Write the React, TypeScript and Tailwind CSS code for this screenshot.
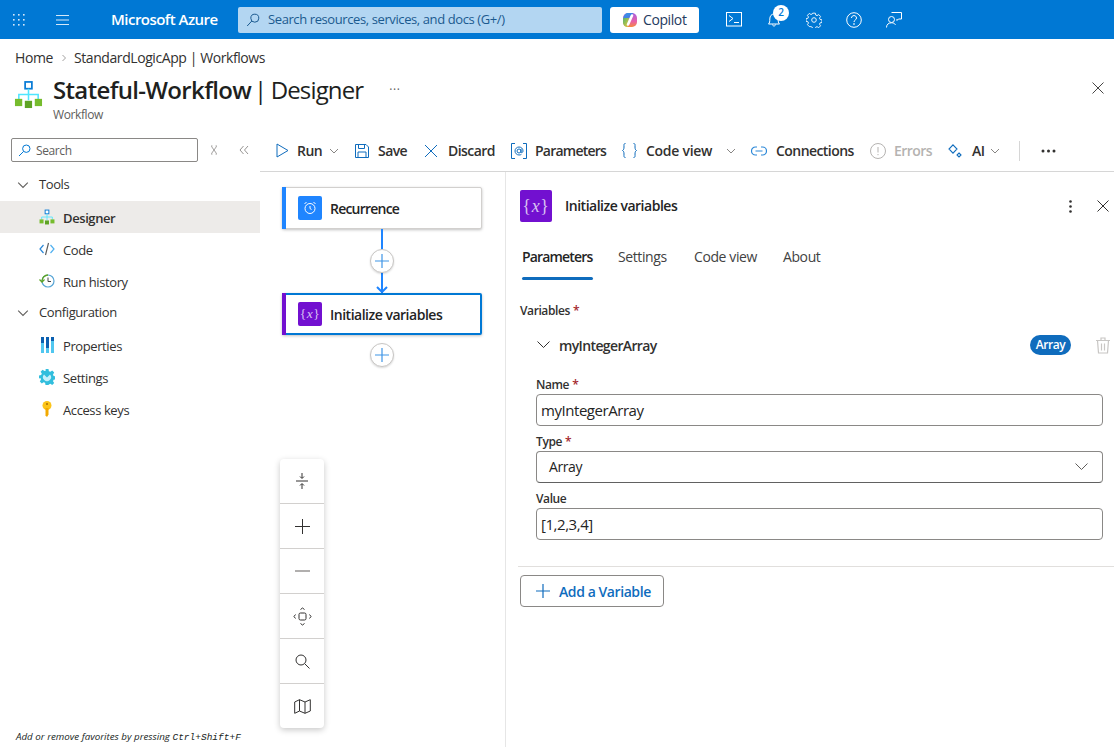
import React from 'react';

const fontBody = "font-['Open_Sans',sans-serif] tracking-[-0.025em]";

function WorkflowIcon({ size = 30 }: { size?: number }) {
  return (
    <svg width={size} height={size} viewBox="0 0 30 30" fill="none">
      <rect x="11.5" y="2" width="7" height="7" fill="#fff" stroke="#0a7cd6" strokeWidth="1.8" />
      <path d="M15 9v6M5 20v-5h20v5M15 15v6" stroke="#50e6ff" strokeWidth="1.6" />
      <rect x="1" y="19.5" width="7.5" height="7.5" fill="#76bc2d" />
      <rect x="11.2" y="21.5" width="7.5" height="7.5" fill="#5ea324" />
      <rect x="21.5" y="19.5" width="7.5" height="7.5" fill="#76bc2d" />
    </svg>
  );
}

function VarIcon({ size, radius }: { size: number; radius: string }) {
  return (
    <div
      className={`${radius} bg-[#7210d0] flex items-center justify-center text-[#d9c2f2] font-['Liberation_Serif',serif] shrink-0`}
      style={{ width: size, height: size, fontSize: size * 0.56 }}
    >
      <span className="tracking-[0.04em]">{'{'}<i>x</i>{'}'}</span>
    </div>
  );
}

function Chevron({ size = 10, color = '#605e5c' }: { size?: number; color?: string }) {
  return (
    <svg width={size} height={size} viewBox="0 0 10 10" fill="none">
      <path d="M1 3l4 4 4-4" stroke={color} strokeWidth="0.9" />
    </svg>
  );
}

function TopBar() {
  return (
    <header className="h-[39px] bg-[#0078d4] flex items-center text-white shrink-0">
      <div className="w-[38px] flex justify-center">
        <svg width="14" height="14" viewBox="0 0 14 14" fill="#d5e8f8">
          {[1, 6, 11].map((y) =>
            [1, 6, 11].map((x) => <rect key={`${x}-${y}`} x={x} y={y} width="1.6" height="1.6" />)
          )}
        </svg>
      </div>
      <div className="ml-[18px] w-[13px]">
        <svg width="13" height="12" viewBox="0 0 13 12" stroke="#d5e8f8" strokeWidth="1.1">
          <path d="M0 1.5h13M0 6h13M0 10.5h13" />
        </svg>
      </div>
      <div className="ml-[42px] w-[127px] text-[15px] font-semibold whitespace-nowrap tracking-[-0.035em]">Microsoft Azure</div>
      <div className="w-[364px] h-[26px] bg-[#b3d6f2] rounded-[2px] flex items-center text-[#1b5a8f] text-[13px] shrink-0">
        <svg className="ml-[8px] mr-[8px]" width="14" height="14" viewBox="0 0 14 14" fill="none" stroke="#1b5a8f" strokeWidth="1">
          <circle cx="8.8" cy="5.2" r="4" />
          <path d="M5.8 8l-4.6 5" />
        </svg>
        <span className="whitespace-nowrap">Search resources, services, and docs (G+/)</span>
      </div>
      <div className="ml-[8px] w-[89px] h-[26px] bg-white rounded-[3px] flex items-center shrink-0 text-[#243a5e] text-[14px] font-medium">
        <svg className="ml-[12px] mr-[5px]" width="16" height="16" viewBox="0 0 16 16">
          <defs>
            <linearGradient id="cpa" x1="0" y1="0" x2="1" y2="1">
              <stop offset="0" stopColor="#2b9fe8" />
              <stop offset="1" stopColor="#5a6be0" />
            </linearGradient>
            <linearGradient id="cpb" x1="0" y1="0" x2="0" y2="1">
              <stop offset="0" stopColor="#a860e0" />
              <stop offset="0.6" stopColor="#e860a8" />
              <stop offset="1" stopColor="#f58a3f" />
            </linearGradient>
            <linearGradient id="cpc" x1="0" y1="0" x2="1" y2="1">
              <stop offset="0" stopColor="#4fb86a" />
              <stop offset="1" stopColor="#f2c73a" />
            </linearGradient>
          </defs>
          <rect x="1" y="1" width="14" height="14" rx="5" fill="url(#cpb)" />
          <path d="M6 1h5L9 6.500H1.200C1.500 3.500 3.500 1 6 1z" fill="url(#cpa)" />
          <path d="M1.200 6h5.800L5.500 15C3 15 1 13 1 10z" fill="url(#cpc)" />
          <path d="M10 3.500L6 12.500" stroke="#fff" strokeWidth="2.600" strokeLinecap="round" />
        </svg>
        <span>Copilot</span>
      </div>
      {/* shell */}
      <div className="ml-[27px] w-[16px]">
        <svg width="16" height="15" viewBox="0 0 16 15" fill="none" stroke="#fff" strokeWidth="1">
          <rect x="0.5" y="0.5" width="15" height="13.500" />
          <path d="M3 3.500l4 3-4 3M8 10.500h5" />
        </svg>
      </div>
      {/* bell with count */}
      <div className="ml-[24px] w-[16px] relative">
        <svg width="16" height="16" viewBox="0 0 16 16" fill="none" stroke="#fff" strokeWidth="1">
          <path d="M2.500 12c1.200-1.200 1.300-2.500 1.300-5C3.800 4 5.500 2 8 2s4.200 2 4.200 5c0 2.500.1 3.800 1.300 5zM6.500 12.500c0 2 3 2 3 0" />
        </svg>
        <div className="absolute left-[7px] top-[-7px] w-[16px] h-[16px] rounded-full bg-white text-[#0078d4] text-[10px] font-semibold flex items-center justify-center">
          2
        </div>
      </div>
      {/* gear */}
      <div className="ml-[24px] w-[16px]">
        <svg width="16" height="16" viewBox="0 0 16 16" fill="none" stroke="#eef6fc" strokeWidth="1">
          <circle cx="8" cy="8" r="2.300" />
          <path d="M6.600 0.800h2.800l.4 2 1.400.6 1.800-1.100 1.900 2-1.100 1.700.6 1.400 2 .4v2.800l-2 .4-.6 1.400 1.100 1.700-1.900 2-1.800-1.100-1.400.6-.4 2H6.600l-.4-2-1.400-.6L3 14.900l-1.900-2 1.100-1.700-.6-1.400-2-.4V6.600l2-.4.6-1.400L1.100 3.100 3 1.100l1.800 1.100 1.400-.6z" transform="translate(0.400 0.400) scale(0.95)" />
        </svg>
      </div>
      {/* help */}
      <div className="ml-[24px] w-[16px]">
        <svg width="16" height="16" viewBox="0 0 16 16" fill="none" stroke="#fff" strokeWidth="1">
          <circle cx="8" cy="8" r="7.300" />
          <path d="M5.500 6c0-1.500 1.100-2.400 2.500-2.400S10.500 4.500 10.500 6C10.500 8 8 8 8 10" />
          <circle cx="8" cy="12" r="0.400" fill="#fff" />
        </svg>
      </div>
      {/* feedback */}
      <div className="ml-[24px] w-[16px]">
        <svg width="16" height="16" viewBox="0 0 16 16" fill="none" stroke="#fff" strokeWidth="1">
          <path d="M5.500 0.500h10v6.500h-3l-1.500 1.500V7" />
          <circle cx="5.500" cy="7.500" r="3" />
          <path d="M0.500 15.500c0-3 2-4.700 5-4.700 1.800 0 3 .5 4 2" />
        </svg>
      </div>
    </header>
  );
}

function PageHeader() {
  return (
    <div className="h-[91px] shrink-0 flex flex-col relative">
      <div className="h-[37px] flex items-center pl-[15px] text-[14px] text-[#323130]">
        <span>Home</span>
        <svg className="ml-[7px] mr-[6px]" width="8" height="8" viewBox="0 0 8 8" fill="none" stroke="#8a8886" strokeWidth="0.8">
          <path d="M2.500 1l3 3-3 3" />
        </svg>
        <span className="whitespace-nowrap tracking-[-0.03em]">StandardLogicApp | Workflows</span>
      </div>
      <div className="flex items-start pl-[14px] -mt-[1px]">
        <div className="mt-[5px]">
          <WorkflowIcon size={29} />
        </div>
        <div className="ml-[10px]">
          <div className="flex items-center h-[29px] text-[24px] text-[#201f1e] whitespace-nowrap leading-none tracking-[-0.0275em]">
            <span className="font-semibold">Stateful-Workflow</span>
            <span className="ml-[3px]">|</span>
            <span className="ml-[4px] tracking-[-0.035em]">Designer</span>
            <span className="ml-[26px] text-[#605e5c] text-[12px] tracking-[0.05em]">···</span>
          </div>
          <div className="text-[12px] leading-[16px] mt-[3px] text-[#605e5c]">Workflow</div>
        </div>
        <svg className="ml-auto mr-[10px] mt-[7px]" width="12" height="12" viewBox="0 0 12 12" stroke="#323130" strokeWidth="0.9">
          <path d="M0.500 0.500l11 11M11.500 0.500l-11 11" />
        </svg>
      </div>
    </div>
  );
}

function SideItem({ icon, label, active }: { icon: React.ReactNode; label: string; active?: boolean }) {
  return (
    <div className={`h-[32px] flex items-center pl-[39px] text-[13px] text-[#323130] ${active ? 'bg-[#edebe9] font-semibold' : ''}`}>
      <div className="w-[16px] h-[16px] flex items-center justify-center shrink-0">{icon}</div>
      <span className="ml-[8px] pt-[3px]">{label}</span>
    </div>
  );
}

function SideGroup({ label }: { label: string }) {
  return (
    <div className="h-[31px] mb-[1px] flex items-center pl-[17px] text-[13px] text-[#323130]">
      <Chevron size={12} />
      <span className="ml-[10px]">{label}</span>
    </div>
  );
}

function Sidebar() {
  return (
    <aside className="w-[260px] shrink-0 flex flex-col relative">
      <div className="h-[24px] mt-[8px] flex items-center pl-[11px]">
        <div className="w-[187px] h-[24px] border border-[#8a8886] rounded-[2px] flex items-center text-[12px] text-[#605e5c]">
          <svg className="ml-[6px] mr-[5px]" width="13" height="13" viewBox="0 0 13 13" fill="none" stroke="#0078d4" strokeWidth="1">
            <circle cx="8.300" cy="4.700" r="3.700" />
            <path d="M5.500 7.500l-4.500 4.500" />
          </svg>
          <span className="pt-[1px]">Search</span>
        </div>
        <svg className="ml-[12px]" width="8" height="10" viewBox="0 0 8 10" fill="none" stroke="#8a8886" strokeWidth="0.8">
          <path d="M1.500 1.500l5 7M6.500 1.500l-5 7M1 1h1.500M5.500 1H7M1 9h1.500M5.500 9H7" />
        </svg>
        <svg className="ml-[21px]" width="10" height="10" viewBox="0 0 10 10" fill="none" stroke="#8a8886" strokeWidth="0.9">
          <path d="M4.500 1L1 5l3.500 4M9 1L5.500 5 9 9" />
        </svg>
      </div>
      <div className="h-[7px]" />
      <SideGroup label="Tools" />
      <SideItem active label="Designer" icon={<WorkflowIcon size={16} />} />
      <SideItem
        label="Code"
        icon={
          <svg width="16" height="14" viewBox="0 0 16 14" fill="none" strokeWidth="1.200">
            <path d="M4.500 3L1 7l3.500 4" stroke="#2b88d8" />
            <path d="M11.500 3L15 7l-3.500 4" stroke="#50b0f0" />
            <path d="M9.500 1L6.500 13" stroke="#5c5c5c" />
          </svg>
        }
      />
      <SideItem
        label="Run history"
        icon={
          <svg width="16" height="16" viewBox="0 0 16 16" fill="none">
            <circle cx="9" cy="8" r="6" stroke="#59a6d6" strokeWidth="1.200" />
            <path d="M3 8a6 6 0 0 1 6-6" stroke="#5ea324" strokeWidth="1.300" />
            <path d="M0.500 6.500l2.500 2.500 2.500-2.500" stroke="#5ea324" strokeWidth="1.300" />
            <path d="M9 4.500V8.500h3" stroke="#444" strokeWidth="1" />
          </svg>
        }
      />
      <SideGroup label="Configuration" />
      <SideItem
        label="Properties"
        icon={
          <svg width="13" height="16" viewBox="0 0 13 16">
            <rect x="0" y="0" width="3" height="16" fill="#50c7f0" />
            <rect x="5" y="0" width="3" height="16" fill="#50c7f0" />
            <rect x="10" y="0" width="3" height="16" fill="#50c7f0" />
            <rect x="0" y="0" width="3" height="6" fill="#0a5fb0" />
            <rect x="5" y="0" width="3" height="11" fill="#0a5fb0" />
            <rect x="10" y="0" width="3" height="4" fill="#0a5fb0" />
          </svg>
        }
      />
      <SideItem
        label="Settings"
        icon={
          <svg width="16" height="16" viewBox="0 0 16 16">
            <path d="M6.500 0h3l.4 2.200 1.500.6 1.800-1.200 2 2-1.200 1.800.6 1.500 2.200.4v3l-2.200.4-.6 1.500 1.200 1.800-2 2-1.800-1.200-1.500.6L9.500 16h-3l-.4-2.200-1.500-.6-1.800 1.200-2-2 1.200-1.800-.6-1.500L0 9.500v-3l2.200-.4.6-1.500L1.600 2.800l2-2 1.800 1.200 1.500-.6z" fill="#32bedd" />
            <path d="M5 5.500a4 4 0 1 0 6 0L8 8.500z" fill="#c8f0fb" />
          </svg>
        }
      />
      <SideItem
        label="Access keys"
        icon={
          <svg width="12" height="16" viewBox="0 0 12 16">
            <circle cx="6" cy="4.500" r="4.500" fill="#fcc419" />
            <path d="M4.500 7h3v6.500L6 16l-1.500-1.500z" fill="#f2a900" />
            <circle cx="6" cy="3" r="1" fill="#a86e00" />
          </svg>
        }
      />
      <div className="absolute left-[16px] bottom-[2px] whitespace-nowrap text-[9.75px] italic tracking-normal text-[#201f1e] font-['Open_Sans',sans-serif]">
        Add or remove favorites by pressing <span className="font-['Liberation_Mono',monospace] text-[9.5px]">Ctrl+Shift+F</span>
      </div>
    </aside>
  );
}

function ToolItem({
  width,
  icon,
  label,
  gap = 9,
  disabled,
  chevron,
  tracking = 'tracking-[-0.04em]',
}: {
  width: number;
  icon: React.ReactNode;
  label?: string;
  gap?: number;
  disabled?: boolean;
  chevron?: number;
  tracking?: string;
}) {
  return (
    <div className="flex items-center h-full shrink-0" style={{ width }}>
      {icon}
      {label && (
        <span
          className={`text-[14px] font-semibold whitespace-nowrap ${tracking} ${disabled ? 'text-[#b5b3b1]' : 'text-[#323130]'}`}
          style={{ marginLeft: gap }}
        >
          {label}
        </span>
      )}
      {chevron !== undefined && (
        <span style={{ marginLeft: chevron }}>
          <Chevron size={10} color="#797775" />
        </span>
      )}
    </div>
  );
}

function Toolbar() {
  const blue = '#0f6cbd';
  return (
    <div className="h-[42px] border-b border-[#d6d6d6] flex items-center pl-[15px] shrink-0 relative">
      <ToolItem
        width={80}
        label="Run"
        gap={8}
        chevron={7}
        icon={
          <svg width="13" height="15" viewBox="0 0 13 15" fill="none" stroke={blue} strokeWidth="1" className="ml-[1px]">
            <path d="M1 1l11 6.500L1 14z" />
          </svg>
        }
      />
      <ToolItem
        width={69}
        label="Save"
        icon={
          <svg width="14" height="14" viewBox="0 0 14 14" fill="none" stroke={blue} strokeWidth="1">
            <path d="M0.500 0.500h10.500l2.500 2.500v10.500h-13zM3.500 0.500v4h6v-4M3 13.500V8h8v5.500" />
          </svg>
        }
      />
      <ToolItem
        width={87}
        label="Discard"
        gap={10}
        icon={
          <svg width="14" height="14" viewBox="0 0 14 14" fill="none" stroke={blue} strokeWidth="1">
            <path d="M1 1l12 12M13 1L1 13" />
          </svg>
        }
      />
      <ToolItem
        width={111}
        label="Parameters"
        gap={8}
        tracking="tracking-[-0.055em]"
        icon={
          <svg width="16" height="16" viewBox="0 0 16 16" fill="none" stroke={blue} strokeWidth="1">
            <path d="M4 0.500H0.500v15H4M12 0.500h3.500v15H12" />
            <circle cx="8" cy="8" r="2" />
            <path d="M10 6v3c0 1 2 1 2-1 0-2.500-1.800-4-4-4S4 5.800 4 8s1.800 4 4 4c1 0 1.700-.2 2.400-.6" />
          </svg>
        }
      />
      <ToolItem
        width={129}
        label="Code view"
        gap={9}
        chevron={14}
        tracking="tracking-[-0.02em]"
        icon={
          <svg width="15" height="15" viewBox="0 0 15 15" fill="none" stroke={blue} strokeWidth="1">
            <path d="M3.500 0.500C1.500 0.500 2 2 2 4c0 2-.5 3-1.500 3.500C1.500 8 2 9 2 11c0 2-.5 3.500 1.500 3.500M11.500 0.500c2 0 1.500 1.500 1.500 3.500 0 2 .5 3 1.500 3.500C13.500 8 13 9 13 11c0 2 .5 3.500-1.500 3.500" />
          </svg>
        }
      />
      <ToolItem
        width={119}
        label="Connections"
        gap={9}
        icon={
          <svg width="16" height="10" viewBox="0 0 16 10" fill="none" stroke="#2b88d8" strokeWidth="1.200">
            <path d="M6 1H4.500a4 4 0 0 0 0 8H6M10 1h1.500a4 4 0 0 1 0 8H10M4.500 5h7" />
          </svg>
        }
      />
      <ToolItem
        width={78}
        label="Errors"
        gap={8}
        disabled
        icon={
          <svg width="16" height="16" viewBox="0 0 16 16" fill="none" stroke="#b5b3b1" strokeWidth="1">
            <circle cx="8" cy="8" r="7.500" />
            <path d="M8 4v5.500M8 11v1.200" />
          </svg>
        }
      />
      <ToolItem
        width={71}
        label="AI"
        gap={10}
        chevron={6}
        icon={
          <svg width="14" height="14" viewBox="0 0 14 14" fill="none" stroke={blue} strokeWidth="1.100">
            <path d="M5 0.800L9 5 5 9.200 1 5zM11 9l2 2-2 2-2-2z" />
          </svg>
        }
      />
      <div className="w-[1px] h-[20px] bg-[#d6d6d6] shrink-0" />
      <div className="ml-[21px] shrink-0">
        <svg width="15" height="4" viewBox="0 0 15 4" fill="#323130">
          <circle cx="2" cy="2" r="1.500" />
          <circle cx="7.500" cy="2" r="1.500" />
          <circle cx="13" cy="2" r="1.500" />
        </svg>
      </div>
    </div>
  );
}

function PlusCircle() {
  return (
    <div className="w-[24px] h-[24px] rounded-full bg-white border border-[#c8c6c4] shadow-[0_1px_2px_rgba(0,0,0,0.15)] flex items-center justify-center">
      <svg width="14" height="14" viewBox="0 0 14 14" stroke="#3f95e6" strokeWidth="1.200">
        <path d="M7 0v14M0 7h14" />
      </svg>
    </div>
  );
}

function Node({
  children,
  label,
  selected,
  bar,
  tracking,
}: {
  children: React.ReactNode;
  label: string;
  selected?: boolean;
  bar: string;
  tracking: string;
}) {
  return (
    <div
      className={`w-[200px] h-[42px] flex items-center bg-white relative rounded-[2px] ${
        selected ? 'border-2 border-[#0078d4] shadow-[0_1px_3px_rgba(0,0,0,0.25)]' : 'border border-[#d2d0ce] shadow-[0_1px_3px_rgba(0,0,0,0.25)]'
      }`}
    >
      <div className={`absolute w-[4px] ${bar} ${selected ? 'left-[-2px] top-[-2px] bottom-[-2px]' : 'left-[-1px] top-[-1px] bottom-[-1px]'}`} />
      <div className={selected ? 'ml-[14px]' : 'ml-[15px]'}>{children}</div>
      <span className={`ml-[8px] text-[14px] font-semibold text-[#242424] whitespace-nowrap ${tracking}`}>{label}</span>
    </div>
  );
}

function ZoomControls() {
  const cell = 'h-[45px] flex items-center justify-center border-b border-[#d2d0ce] last:border-b-0';
  const s = { fill: 'none', stroke: '#323130', strokeWidth: 1 };
  return (
    <div className="absolute left-[20px] top-[287px] w-[44px] h-[269px] bg-white rounded-[4px] shadow-[0_2px_6px_rgba(0,0,0,0.22)] flex flex-col">
      <div className={cell}>
        <svg width="14" height="18" viewBox="0 0 14 18" {...s}>
          <path d="M1 9h12M7 1v5M5 4.500L7 6.500 9 4.500M7 17v-5M5 13.500L7 11.500 9 13.500" />
        </svg>
      </div>
      <div className={cell}>
        <svg width="15" height="15" viewBox="0 0 15 15" {...s}>
          <path d="M7.500 0v15M0 7.500h15" />
        </svg>
      </div>
      <div className={cell}>
        <svg width="15" height="2" viewBox="0 0 15 2" stroke="#979593" strokeWidth="1.500">
          <path d="M0 1h15" />
        </svg>
      </div>
      <div className={cell}>
        <svg width="19" height="19" viewBox="0 0 19 19" {...s}>
          <rect x="6" y="6" width="7" height="7" rx="1.500" />
          <path d="M7.500 2.500L9.500 1l2 1.500M7.500 16.500L9.500 18l2-1.500M2.500 7.500L1 9.500l1.500 2M16.500 7.500L18 9.500l-1.500 2" />
        </svg>
      </div>
      <div className={cell}>
        <svg width="15" height="15" viewBox="0 0 15 15" {...s}>
          <circle cx="6" cy="6" r="5" />
          <path d="M9.800 9.800L14.500 14.500" />
        </svg>
      </div>
      <div className="flex-1 flex items-center justify-center">
        <svg width="17" height="15" viewBox="0 0 17 15" {...s}>
          <path d="M0.700 3L5.500 0.700 11 3l5.300-2.300V12L11 14.300 5.500 12 0.700 14.300zM5.500 0.700V12M11 3v11.300" />
        </svg>
      </div>
    </div>
  );
}

function Canvas() {
  return (
    <div className="w-[245px] shrink-0 relative flex flex-col items-start pl-[22px] pt-[15px]">
      <Node
        label="Recurrence"
        bar="bg-[#1f85ff]"
        tracking="tracking-[-0.056em]"
        children={
          <div className="w-[24px] h-[24px] rounded-[2px] bg-[#1f85ff] flex items-center justify-center">
            <svg width="14" height="14" viewBox="0 0 14 14" fill="none" stroke="#fff" strokeWidth="1">
              <circle cx="7" cy="7.500" r="5" />
              <path d="M7 5v2.500l1.500 1M1.500 3L3.500 1M12.500 3L10.500 1" />
            </svg>
          </div>
        }
      />
      <div className="w-[200px] h-[64px] relative flex justify-center items-center">
        <div className="absolute left-1/2 -ml-[1px] top-0 bottom-0 w-[2px] bg-[#1f85ff]" />
        <svg className="absolute left-1/2 -ml-[6px] bottom-[0px]" width="12" height="7" viewBox="0 0 12 7" fill="none" stroke="#1f85ff" strokeWidth="2">
          <path d="M1 1l5 5 5-5" />
        </svg>
        <div className="relative">
          <PlusCircle />
        </div>
      </div>
      <Node
        label="Initialize variables"
        bar="bg-[#7210d0]"
        selected
        tracking="tracking-[-0.035em]"
        children={<VarIcon size={24} radius="rounded-[2px]" />}
      />
      <div className="w-[200px] flex justify-center mt-[8px]">
        <PlusCircle />
      </div>
      <ZoomControls />
    </div>
  );
}

function Field({ label, required, value }: { label: string; required?: boolean; value: string }) {
  return (
    <div className="flex flex-col">
      <div className="h-[17px] flex items-center text-[12px] font-semibold text-[#323130]">
        {label}
        {required && <span className="ml-[3px] text-[#a4262c]">*</span>}
      </div>
      <div className="h-[32px] mt-[1px] border border-[#8a8886] rounded-[4px] flex items-center pl-[4px] text-[15px] tracking-[-0.03em] text-[#242424]">{value}</div>
    </div>
  );
}

function DetailPanel() {
  return (
    <div className="flex-1 border-l border-[#e6e6e6] flex flex-col min-w-0">
      <div className="h-[32px] mt-[18px] ml-[14px] flex items-center">
        <VarIcon size={32} radius="rounded-[2px]" />
        <span className="ml-[13px] -mt-[2px] text-[14px] font-semibold text-[#242424] tracking-[-0.035em]">Initialize variables</span>
        <svg className="ml-auto" width="3" height="13" viewBox="0 0 3 13" fill="#323130">
          <circle cx="1.500" cy="1.500" r="1.300" />
          <circle cx="1.500" cy="6.500" r="1.300" />
          <circle cx="1.500" cy="11.500" r="1.300" />
        </svg>
        <svg className="ml-[25px] mr-[5px]" width="12" height="12" viewBox="0 0 12 12" stroke="#323130" strokeWidth="1">
          <path d="M0.500 0.500l11 11M11.500 0.500l-11 11" />
        </svg>
      </div>
      <div className="ml-[16px] mt-[19px] h-[38px] flex text-[14px] text-[#424242]">
        <div className="w-[71px] relative font-semibold text-[#242424] leading-[31px] whitespace-nowrap tracking-[-0.06em]">
          Parameters
          <div className="absolute left-0 right-0 bottom-[-1px] h-[3px] rounded-[2px] bg-[#0f6cbd]" />
        </div>
        <div className="ml-[25px] w-[51px] leading-[31px]">Settings</div>
        <div className="ml-[25px] w-[65px] leading-[31px] whitespace-nowrap">Code view</div>
        <div className="ml-[24px] leading-[31px]">About</div>
      </div>
      <div className="ml-[14px] mt-[23px] h-[17px] flex items-center text-[12px] font-semibold text-[#323130]">
        Variables<span className="ml-[3px] text-[#a4262c]">*</span>
      </div>
      <div className="ml-[30px] mt-[14px] h-[24px] flex items-center">
        <svg className="ml-[1px]" width="13" height="8" viewBox="0 0 13 8" fill="none" stroke="#323130" strokeWidth="1">
          <path d="M0.500 0.500l6 6 6-6" />
        </svg>
        <span className="ml-[9px] text-[14px] font-semibold text-[#323130] tracking-[-0.045em]">myIntegerArray</span>
        <div className="ml-auto w-[41px] h-[20px] rounded-full bg-[#0f6cbd] text-white text-[12px] font-semibold flex items-center justify-center">Array</div>
        <svg className="ml-[24px] mr-[3px]" width="16" height="17" viewBox="0 0 16 17" fill="none" stroke="#c8c6c4" strokeWidth="1.200">
          <path d="M1 3.500h14M6 3V1h4v2M2.500 3.500l1 12.500h9l1-12.500M6.500 6.500v7M9.500 6.500v7" />
        </svg>
      </div>
      <div className="ml-[30px] mr-[11px] mt-[19px] flex flex-col gap-[7px]">
        <Field label="Name" required value="myIntegerArray" />
        <div className="flex flex-col">
          <div className="h-[17px] flex items-center text-[12px] font-semibold text-[#323130]">
            Type<span className="ml-[3px] text-[#a4262c]">*</span>
          </div>
          <div className="h-[32px] mt-[1px] border border-[#8a8886] border-b-[#616161] rounded-[4px] flex items-center pl-[12px] pr-[14px] text-[14px] text-[#242424]">
            <span className="-mt-[2px]">Array</span>
            <svg className="ml-auto" width="13" height="8" viewBox="0 0 13 8" fill="none" stroke="#605e5c" strokeWidth="1">
              <path d="M0.500 0.500l6 6 6-6" />
            </svg>
          </div>
        </div>
        <Field label="Value" value="[1,2,3,4]" />
      </div>
      <div className="ml-[12px] mt-[26px] h-[1px] bg-[#e1dfdd]" />
      <div className="ml-[14px] mt-[8px] w-[144px] h-[32px] border border-[#8a8886] rounded-[4px] flex items-center text-[#0f6cbd] text-[14px] font-semibold tracking-[-0.03em]">
        <svg className="ml-[15px] mr-[9px]" width="14" height="14" viewBox="0 0 14 14" stroke="#0f6cbd" strokeWidth="1.200">
          <path d="M7 0v14M0 7h14" />
        </svg>
        Add a Variable
      </div>
    </div>
  );
}

export default function App() {
  return (
    <div className={`w-[1114px] h-[747px] overflow-hidden bg-white flex flex-col ${fontBody}`}>
      <TopBar />
      <PageHeader />
      <div className="flex flex-1 min-h-0">
        <Sidebar />
        <div className="flex-1 flex flex-col min-w-0">
          <Toolbar />
          <div className="flex flex-1 min-h-0">
            <Canvas />
            <DetailPanel />
          </div>
        </div>
      </div>
    </div>
  );
}
